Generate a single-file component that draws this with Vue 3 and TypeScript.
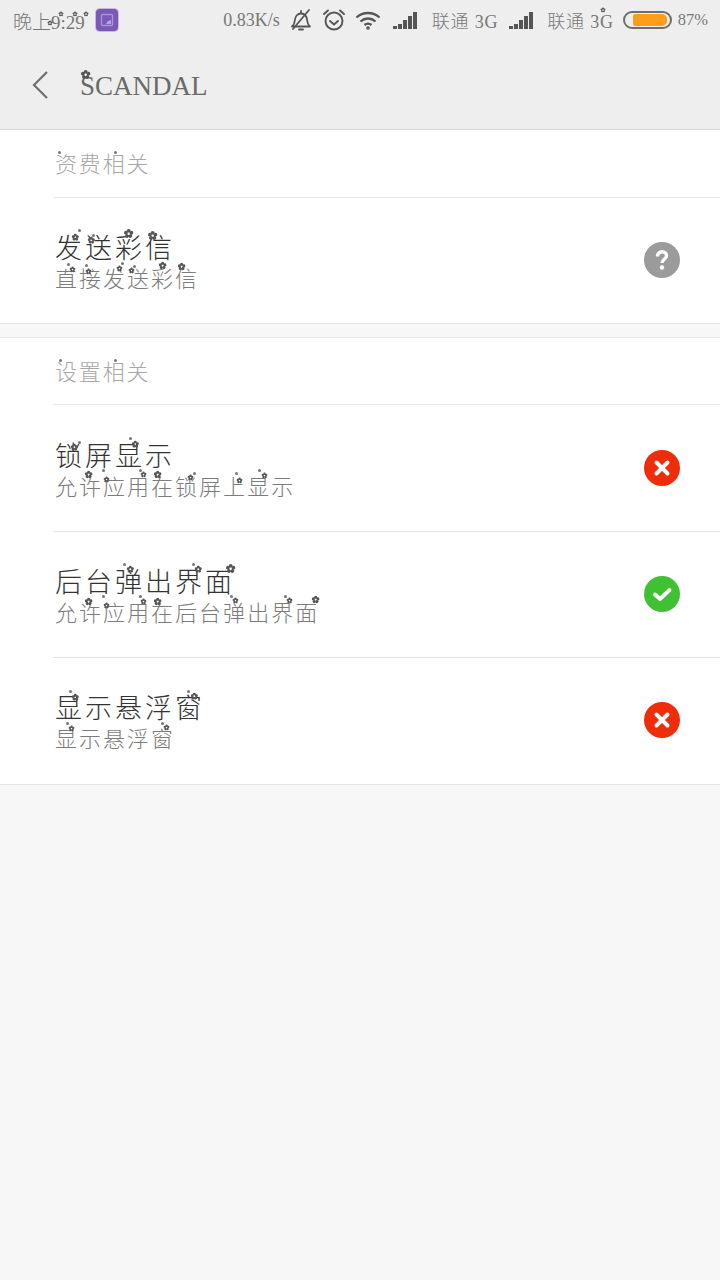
<script setup lang="ts">
import { h } from 'vue'

type Status = 'help' | 'off' | 'on'

interface Row {
  title: string
  desc: string
  status: Status
}

interface Section {
  label: string
  rows: Row[]
}

interface Deco {
  x: number
  y: number
  dot?: [number, number]
  big?: boolean
}

const sections: Section[] = [
  {
    label: '资费相关',
    rows: [{ title: '发送彩信', desc: '直接发送彩信', status: 'help' }],
  },
  {
    label: '设置相关',
    rows: [
      { title: '锁屏显示', desc: '允许应用在锁屏上显示', status: 'off' },
      { title: '后台弹出界面', desc: '允许应用在后台弹出界面', status: 'on' },
      { title: '显示悬浮窗', desc: '显示悬浮窗', status: 'off' },
    ],
  },
]

// the system font in the screenshot has little flowers on some characters
const decos: Record<string, Deco> = {
  发: { x: 0.74, y: 0.15, dot: [0.89, -0.1] },
  送: { x: 0.22, y: 0.26, dot: [0.33, 0.07] },
  彩: { x: 0.52, y: 0, big: true },
  信: { x: 0.3, y: 0.07, big: true },
  直: { x: 0.8, y: 0.2, dot: [0.6, -0.05] },
  接: { x: 0.45, y: 0.3, dot: [0.35, 0] },
  锁: { x: 0.72, y: 0.23, dot: [0.9, 0.05] },
  显: { x: 0.77, y: 0.12, dot: [0.57, -0.08] },
  许: { x: 0.45, y: 0.1, big: true },
  应: { x: 0.18, y: 0.3, dot: [0, -0.1] },
  用: { x: 0.73, y: 0.1, dot: [0.6, -0.1] },
  在: { x: 0.3, y: 0.1, big: true },
  上: { x: 0.75, y: 0.35, dot: [0.6, 0.05] },
  弹: { x: 0.55, y: 0.07, dot: [0.37, -0.1] },
  界: { x: 0.85, y: 0.07, dot: [0.67, -0.1] },
  面: { x: 0.95, y: 0.04, big: true },
  窗: { x: 0.7, y: 0.1, dot: [0.5, -0.1] },
}

const labelDots: Record<string, number> = { 资: 0.2, 设: 0.25, 相: 0.6 }

function chars(text: string): string[] {
  return Array.from(text)
}

function lines(row: Row) {
  return [
    { kind: 'row-title', text: row.title },
    { kind: 'row-desc', text: row.desc },
  ]
}

const petals = [0, 72, 144, 216, 288]

const Flower = () =>
  h('svg', { viewBox: '-10 -10 20 20' }, [
    ...petals.map((a) => h('circle', { r: 3.4, cy: -5, transform: `rotate(${a})` })),
    h('circle', { r: 1.8, fill: '#fff' }),
  ])

const timeFlowers = [
  [34, 13],
  [45, 4],
  [59, 4],
  [70, 4],
]

const signalBars = [3, 5, 9, 13, 17]
</script>

<template>
  <div class="page">
    <header class="top">
      <div class="status">
        <span class="time">
          晚上9:29
          <Flower
            v-for="f in timeFlowers"
            :key="f[0]"
            class="flower tiny"
            :style="{ left: `${f[0]}px`, top: `${f[1]}px` }"
          />
        </span>
        <span class="app-badge">
          <svg width="16" height="16" viewBox="0 0 16 16" fill="none">
            <rect x="2.500" y="2.500" width="11" height="11" rx="1" stroke="#a994d6" stroke-width="1.400" />
            <path d="M7 12l2-3 3-1v4z" fill="#b7a6e0" />
          </svg>
        </span>
        <span class="grow"></span>
        <span class="speed">0.83K/s</span>
        <svg class="ico" width="22" height="24" viewBox="0 0 22 24" fill="none" stroke="#555" stroke-width="1.800">
          <path d="M2 18.500c2-1.500 2.600-3 2.800-6 .3-4 2.600-7 6.200-7s5.800 3 6.200 7c.2 3 .8 4.500 2.800 6z" stroke-linejoin="round" />
          <path d="M9 21.500h4M11 3v2M3 21 19 2" stroke-linecap="round" />
        </svg>
        <svg class="ico alarm" width="24" height="24" viewBox="0 0 24 24" fill="none" stroke="#555" stroke-width="1.900">
          <circle cx="12" cy="13" r="8.500" />
          <path d="M8 13l4 3.500 4-3.500M2 6l4-3.500M22 6l-4-3.500" stroke-linecap="round" stroke-linejoin="round" />
        </svg>
        <svg class="ico wifi" width="26" height="20" viewBox="0 0 26 20" fill="none" stroke="#555" stroke-width="2.300">
          <path d="M1.500 7.500c6.500-6 16.500-6 23 0M5.500 11.500c4.500-4 10.500-4 15 0M9.500 15c2-1.700 5-1.700 7 0" />
          <circle cx="13" cy="18" r="1.800" fill="#555" stroke="none" />
        </svg>
        <span class="signal">
          <i v-for="h in signalBars" :key="h" :style="{ height: `${h}px` }"></i>
        </span>
        <span class="carrier">联通 3G</span>
        <span class="signal second">
          <i v-for="h in signalBars" :key="h" :style="{ height: `${h}px` }"></i>
        </span>
        <span class="carrier">联通 3G<Flower class="flower tiny g-mark" /></span>
        <span class="battery"><span class="level"></span></span>
        <span class="percent">87%</span>
      </div>
      <div class="bar">
        <svg class="back" width="18" height="30" viewBox="0 0 18 30" fill="none" stroke="#6f6f6f" stroke-width="2.200">
          <path d="M16 2 3 15l13 13" />
        </svg>
        <h1 class="title">SCANDAL<Flower class="flower big s-mark" /></h1>
      </div>
    </header>

    <main class="content">
      <section v-for="section in sections" :key="section.label" class="group">
        <div class="group-label">
          <span v-for="(c, i) in chars(section.label)" :key="i" class="ch">
            {{ c }}<i
              v-if="labelDots[c] !== undefined"
              class="dot"
              :style="{ left: `${labelDots[c]}em`, top: '0.29em' }"
            ></i>
          </span>
        </div>
        <div v-for="row in section.rows" :key="row.title" class="row">
          <div class="texts">
            <div v-for="line in lines(row)" :key="line.kind" :class="line.kind">
              <span v-for="(c, i) in chars(line.text)" :key="i" class="ch">
                {{ c }}<template v-if="decos[c]">
                  <Flower
                    class="flower"
                    :class="{ big: decos[c].big }"
                    :style="{ left: `${decos[c].x}em`, top: `${decos[c].y + 0.05}em` }"
                  />
                  <i
                    v-if="decos[c].dot"
                    class="dot"
                    :style="{ left: `${decos[c].dot![0]}em`, top: `${decos[c].dot![1] + 0.05}em` }"
                  ></i>
                </template>
              </span>
            </div>
          </div>
          <span class="state" :class="row.status">
            <svg v-if="row.status === 'help'" width="36" height="36" viewBox="0 0 36 36" fill="none" stroke="#fff" stroke-width="3.400">
              <path d="M13.500 14.500c0-3 2-4.800 4.500-4.800s4.500 1.700 4.500 4c0 3.500-4.500 3.700-4.500 7.300" />
              <circle cx="18" cy="25.500" r="2.200" fill="#fff" stroke="none" />
            </svg>
            <svg v-else-if="row.status === 'off'" width="36" height="36" viewBox="0 0 36 36" fill="none" stroke="#fff" stroke-width="4" stroke-linecap="round">
              <path d="m12.500 12.500 11 11M23.500 12.500l-11 11" />
            </svg>
            <svg v-else width="36" height="36" viewBox="0 0 36 36" fill="none" stroke="#fff" stroke-width="3.800" stroke-linecap="round" stroke-linejoin="round">
              <path d="m11 18.500 5 4.500 9.500-9" />
            </svg>
          </span>
        </div>
      </section>
    </main>
  </div>
</template>

<style>
html,
body {
  margin: 0;
  background: #f7f7f7;
}
</style>

<style scoped>
.page {
  display: flex;
  flex-direction: column;
  width: 720px;
  min-height: 1280px;
  background: #f7f7f7;
  font-family: "Noto Sans CJK SC", "Liberation Serif", serif;
  font-weight: 300;
}

.top {
  background: #eeeeee;
  border-bottom: 1px solid #d6d6d6;
}

.status {
  display: flex;
  align-items: center;
  height: 40px;
  padding: 0 12px 0 13px;
  color: #777;
  font-family: "Liberation Serif", "Noto Sans CJK SC", serif;
  font-size: 18px;
}

.time {
  position: relative;
  width: 72px;
  font-size: 19px;
  white-space: nowrap;
}

.app-badge {
  display: flex;
  align-items: center;
  justify-content: center;
  width: 22px;
  height: 22px;
  margin-left: 11px;
  border-radius: 4px;
  background: #7a58b5;
  box-shadow: 0 0 0 1px #c9b5e6;
}

.grow {
  flex: 1;
}

.speed {
  margin-right: 10px;
  font-size: 18px;
}

.ico {
  flex-shrink: 0;
}

.alarm {
  margin-left: 10px;
}

.wifi {
  margin-left: 9px;
}

.signal {
  display: flex;
  align-items: flex-end;
  gap: 1px;
  height: 17px;
  margin: 0 15px 0 12px;
}

.signal.second {
  margin: 0 14px 0 11px;
}

.signal i {
  width: 4px;
  background: #555;
}

.carrier {
  position: relative;
  font-size: 18px;
  letter-spacing: 0.800px;
  white-space: nowrap;
}

.battery {
  display: flex;
  align-items: center;
  box-sizing: border-box;
  width: 49px;
  height: 18px;
  margin-left: 9px;
  padding: 0 3px 0 8px;
  border: 2px solid #6e6e6e;
  border-radius: 9px;
}

.level {
  flex: 1;
  height: 12px;
  border-radius: 2px 5px 5px 2px;
  background: #ff9c1a;
}

.percent {
  margin-left: 6px;
  font-size: 16.500px;
}

.bar {
  display: flex;
  align-items: center;
  height: 89px;
  padding-left: 31px;
}

.title {
  position: relative;
  margin: 4px 0 0 31px;
  color: #6a6a6a;
  font-family: "Liberation Serif", serif;
  font-size: 27px;
  font-weight: 400;
}

.group {
  margin-bottom: 13px;
  padding-left: 53px;
  background: #fff;
  border-bottom: 1px solid #e4e4e4;
}

.group + .group {
  border-top: 1px solid #e8e8e8;
}

.group-label {
  display: flex;
  align-items: center;
  box-sizing: border-box;
  height: 68px;
  padding: 0 0 3px 2px;
  color: #a8a8a8;
  font-size: 22px;
  border-bottom: 1px solid #e8e8e8;
}

.group + .group .group-label {
  height: 67px;
}

.group-label .ch {
  margin-right: 1.800px;
}

.ch {
  position: relative;
  display: inline-block;
}

.flower {
  position: absolute;
  width: 0.32em;
  height: 0.32em;
  margin: -0.16em 0 0 -0.16em;
  fill: #555;
}

.flower.big {
  width: 0.42em;
  height: 0.42em;
  margin: -0.21em 0 0 -0.21em;
}

.flower.tiny {
  width: 6px;
  height: 6px;
  margin: 0;
}

.g-mark {
  right: 8px;
  top: 0;
}

.s-mark {
  left: 0.2em;
  top: 0.12em;
}

.dot {
  position: absolute;
  width: 3px;
  height: 3px;
  margin: -1.500px 0 0 -1.500px;
  border-radius: 50%;
  background: #777;
}

.row {
  display: flex;
  align-items: center;
  justify-content: space-between;
  height: 125.400px;
  padding: 0 40px 0 2px;
}

.row + .row {
  border-top: 1px solid #e6e6e6;
}

.texts {
  display: flex;
  flex-direction: column;
  padding-top: 1px;
}

.row-title {
  color: #333;
  font-size: 27px;
  line-height: 30px;
}

.row-title .ch {
  margin-right: 3px;
}

.row-desc {
  margin-top: 2px;
  color: #7c7c7c;
  font-size: 22px;
  line-height: 26px;
}

.row-desc .ch {
  margin-right: 2px;
}

.state {
  display: flex;
  width: 36px;
  height: 36px;
  margin-bottom: 0.800px;
  border-radius: 50%;
}

.state.help {
  background: #9b9b9b;
}

.state.off {
  background: #f02d0a;
}

.state.on {
  background: #40c134;
}
</style>
